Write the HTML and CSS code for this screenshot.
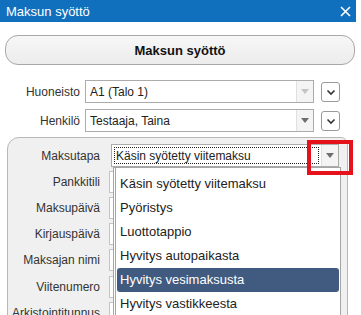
FILE: index.html
```html
<!DOCTYPE html>
<html lang="fi">
<head>
    <meta charset="UTF-8">
    <meta name="viewport" content="width=device-width, initial-scale=1.0">
    <title>Maksun syöttö</title>
    <link rel="stylesheet" href="styles.css">
</head>
<body>
    <div class="dialog">
        <div class="titlebar">
            <span>Maksun syöttö</span>
            <svg class="close" width="11" height="11" viewBox="0 0 11 11"><path d="M1 1L10 10M10 1L1 10" stroke="#fff" stroke-width="1.6"/></svg>
        </div>

        <div class="main">
            <div class="big-button">Maksun syöttö</div>

            <div class="row first">
                <label class="lbl">Huoneisto</label>
                <div class="select">
                    <span class="value">A1 (Talo 1)</span>
                    <span class="arrow disabled"><svg width="8" height="5" viewBox="0 0 8 5"><path d="M0 0H8L4 5Z"/></svg></span>
                </div>
                <div class="chev"><svg width="12" height="12" viewBox="0 0 12 12"><path d="M2.5 4.5L6 8L9.5 4.5" fill="none" stroke="#333" stroke-width="1.6"/></svg></div>
            </div>

            <div class="row">
                <label class="lbl">Henkilö</label>
                <div class="select">
                    <span class="value">Testaaja, Taina</span>
                    <span class="arrow"><svg width="8" height="5" viewBox="0 0 8 5"><path d="M0 0H8L4 5Z"/></svg></span>
                </div>
                <div class="chev"><svg width="12" height="12" viewBox="0 0 12 12"><path d="M2.5 4.5L6 8L9.5 4.5" fill="none" stroke="#333" stroke-width="1.6"/></svg></div>
            </div>

            <div class="panel">
                <div class="prow">
                    <label class="plbl">Maksutapa</label>
                    <div class="select wide">
                        <span class="value focus">Käsin syötetty viitemaksu</span>
                        <span class="arrow"><svg width="8" height="5" viewBox="0 0 8 5"><path d="M0 0H8L4 5Z"/></svg></span>
                    </div>
                </div>
                <div class="prow"><label class="plbl">Pankkitili</label><div class="field"></div></div>
                <div class="prow"><label class="plbl">Maksupäivä</label><div class="field"></div></div>
                <div class="prow"><label class="plbl">Kirjauspäivä</label><div class="field"></div></div>
                <div class="prow"><label class="plbl">Maksajan nimi</label><div class="field"></div></div>
                <div class="prow"><label class="plbl">Viitenumero</label><div class="field"></div></div>
                <div class="prow"><label class="plbl">Arkistointitunnus</label><div class="field"></div></div>

                <ul class="dropdown">
                    <li>Käsin syötetty viitemaksu</li>
                    <li>Pyöristys</li>
                    <li>Luottotappio</li>
                    <li>Hyvitys autopaikasta</li>
                    <li class="selected">Hyvitys vesimaksusta</li>
                    <li>Hyvitys vastikkeesta</li>
                </ul>
            </div>
        </div>

        <div class="highlight"></div>
    </div>
</body>
</html>
```

FILE: styles.css
```css
body {
    margin: 0;
    background: #fff;
    font-family: "Liberation Sans", Arial, sans-serif;
    color: #333;
    overflow: hidden;
}
.dialog {
    position: relative;
    width: 361px;
    height: 315px;
    overflow: hidden;
}
.titlebar {
    width: 356px;
    height: 22px;
    box-sizing: border-box;
    padding: 0 5px 0 6px;
    background: #1170bd;
    color: #fff;
    font-size: 13px;
    display: flex;
    align-items: center;
    justify-content: space-between;
}
.main {
    padding: 13px 6px 0 5px;
}
.big-button {
    height: 30px;
    box-sizing: border-box;
    border: 1px solid #a8a8a8;
    border-radius: 13px;
    background: linear-gradient(#f7f7f7, #ececec);
    font-weight: bold;
    font-size: 13px;
    color: #111;
    display: flex;
    align-items: center;
    justify-content: center;
}
.row {
    display: flex;
    align-items: center;
    margin-top: 6px;
}
.row.first { margin-top: 15px; }
.lbl {
    width: 75px;
    text-align: right;
    font-size: 12px;
    padding-right: 5px;
}
.select {
    width: 229px;
    height: 23px;
    box-sizing: border-box;
    border: 1px solid #ababab;
    background: #fff;
    display: flex;
    align-items: stretch;
    font-size: 12px;
    color: #222;
}
.select .value {
    flex: 1;
    display: flex;
    align-items: center;
    padding-left: 4px;
}
.select .value.focus {
    margin: 2px;
    padding-left: 1px;
    border: 1px dotted #222;
}
.arrow {
    width: 16px;
    background: #f4f4f4;
    border-left: 1px solid #e0e0e0;
    display: flex;
    align-items: center;
    justify-content: center;
    fill: #6e6e6e;
}
.arrow.disabled { fill: #c4c4c4; }
.chev {
    width: 19px;
    height: 20px;
    box-sizing: border-box;
    margin-left: 7px;
    border: 1px solid #9a9a9a;
    border-radius: 3px;
    background: #fff;
    display: flex;
    align-items: center;
    justify-content: center;
}
.panel {
    position: relative;
    margin: 5px 7px 0 2px;
    height: 200px;
    border: 1px solid #b8b8b8;
    border-top-left-radius: 12px;
    border-top-right-radius: 7px;
    background: #f0f0f0;
    padding-top: 4.5px;
}
.prow {
    display: flex;
    align-items: center;
    height: 26.2px;
}
.plbl {
    width: 92px;
    text-align: right;
    font-size: 12px;
    padding-right: 11px;
    white-space: nowrap;
}
.select.wide { width: 228px; }
.field {
    width: 229px;
    height: 22px;
    box-sizing: border-box;
    margin-left: -2px;
    border: 1px solid #c4c4c4;
    background: #fff;
}
.dropdown {
    position: absolute;
    left: 105px;
    top: 29px;
    width: 228px;
    box-sizing: border-box;
    margin: 0;
    padding: 4px 1px;
    list-style: none;
    border: 1px solid #a5a5a5;
    border-left: 3px double #a5a5a5;
    background: #fff;
    font-size: 13px;
    color: #222;
}
.dropdown li {
    height: 24px;
    line-height: 24px;
    padding-left: 3px;
    border-radius: 3px;
}
.dropdown li.selected {
    background: #415a80;
    color: #fff;
}
.highlight {
    position: absolute;
    left: 307px;
    top: 140px;
    width: 46px;
    height: 35px;
    box-sizing: border-box;
    border: 4px solid #e5121c;
}
```
